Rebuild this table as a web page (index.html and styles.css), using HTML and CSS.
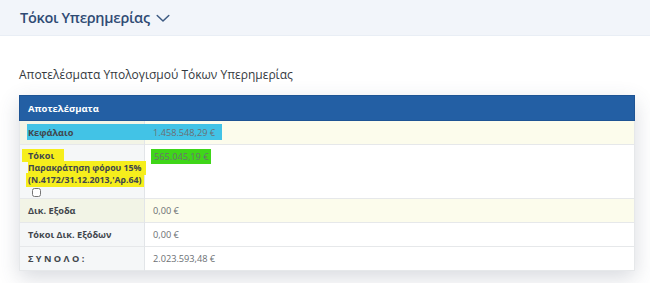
FILE: index.html
```html
<!DOCTYPE html>
<html lang="el">
<head>
<meta charset="utf-8">
<link rel="stylesheet" href="styles.css">
</head>
<body>
<header class="topbar">
  <h1 class="title">Τόκοι Υπερημερίας</h1>
  <svg class="chev" width="14" height="9" viewBox="0 0 14 9"><path d="M1.2 1.5 L7 7 L12.8 1.5" fill="none" stroke="#3d5a82" stroke-width="1.5" stroke-linecap="round" stroke-linejoin="round"/></svg>
</header>
<main class="content">
  <h2 class="subtitle">Αποτελέσματα Υπολογισμού Τόκων Υπερημερίας</h2>
  <table class="results">
    <colgroup><col class="c1"><col class="c2"></colgroup>
    <thead>
      <tr><th colspan="2" class="head">Αποτελέσματα</th></tr>
    </thead>
    <tbody>
      <tr class="odd">
        <th class="lbl"><span class="hl-cyan">Κεφάλαιο</span></th>
        <td class="val">1.458.548,29 €</td>
      </tr>
      <tr class="tall">
        <th class="lbl">
          <div class="line"><span class="hl-yellow y1">Τόκοι</span></div>
          <div class="line"><span class="hl-yellow y2">Παρακράτηση φόρου 15%</span></div>
          <div class="line"><span class="hl-yellow y3">(N.4172/31.12.2013,'Αρ.64)</span></div>
          <div class="line"><input type="checkbox" class="chk"></div>
        </th>
        <td class="val"><span class="hl-green">565.045,19 €</span></td>
      </tr>
      <tr class="odd">
        <th class="lbl">Δικ. Εξοδα</th>
        <td class="val">0,00 €</td>
      </tr>
      <tr>
        <th class="lbl">Τόκοι Δικ. Εξόδων</th>
        <td class="val">0,00 €</td>
      </tr>
      <tr>
        <th class="lbl total">ΣΥΝΟΛΟ:</th>
        <td class="val">2.023.593,48 €</td>
      </tr>
    </tbody>
  </table>
</main>
</body>
</html>
```

FILE: styles.css
```css
* { box-sizing: border-box; }
html, body { margin: 0; padding: 0; }
body {
  width: 650px;
  height: 283px;
  overflow: hidden;
  background: #ffffff;
  font-family: "Open Sans", "Noto Sans", sans-serif;
}
.topbar {
  height: 36px;
  background: #f2f5fa;
  border-bottom: 1px solid #e9eef5;
  display: flex;
  align-items: center;
  padding-left: 20px;
  gap: 6px;
}
.title {
  margin: 0;
  font-size: 14.5px;
  font-weight: 600;
  color: #2f4b74;
  letter-spacing: -0.3px;
}
.chev { margin-top: 2px; }
.content {
  padding: 31px 15px 0 19px;
}
.subtitle {
  margin: 0 0 12px 0;
  font-size: 12px;
  font-weight: 400;
  color: #34393e;
  line-height: 16px;
}
.results {
  width: 616px;
  table-layout: fixed;
  border-collapse: collapse;
  box-shadow: 0 7px 20px rgba(60, 70, 95, 0.2);
  background: #fff;
  font-size: 9.2px;
}
.c1 { width: 125px; }
.head {
  background: #235fa4;
  color: #fff;
  text-align: left;
  font-weight: 700;
  height: 25px;
  padding: 0 8px;
  font-size: 9.5px;
  border: 1px solid #1e5494;
}
.results tbody tr { border-bottom: 1px solid #e6e8ea; }
.results tbody tr.odd { background: #fcfcec; }
.lbl {
  text-align: left;
  font-weight: 700;
  color: #41464c;
  padding: 0 8px;
  height: 24px;
  background: rgba(120, 135, 160, 0.07);
  border-right: 1px solid #e2e5e8;
  border-left: 1px solid #e6e8ea;
  white-space: nowrap;
}
.val {
  padding: 0 8px;
  color: #6b6f73;
  font-weight: 400;
  height: 24px;
  border-right: 1px solid #e6e8ea;
}
.tall .lbl, .tall .val { vertical-align: top; padding-top: 5px; height: 54px; }
.line { line-height: 12px; text-align: left; }
.tall .line:nth-child(2), .tall .line:nth-child(3) { font-size: 8.8px; }
.chk {
  margin: 2px 0 0 4px;
  width: 9px;
  height: 9px;
  vertical-align: top;
}
.total { letter-spacing: 2.4px; }
.hl-cyan {
  background: #42c3e6;
  padding: 2px 149px 1px 1px;
  margin-left: -1px;
}
.hl-yellow { background: #f6ee1c; }
.y1 { padding: 0 10px 0 6px; margin-left: -6px; }
.y2 { padding: 1px 4px 1px 0; }
.y3 { margin-left: -2px; padding: 1px 2px 1px 2px; }
.hl-green { background: #3fd619; padding: 1px 3px; margin-left: -2px; }
```
